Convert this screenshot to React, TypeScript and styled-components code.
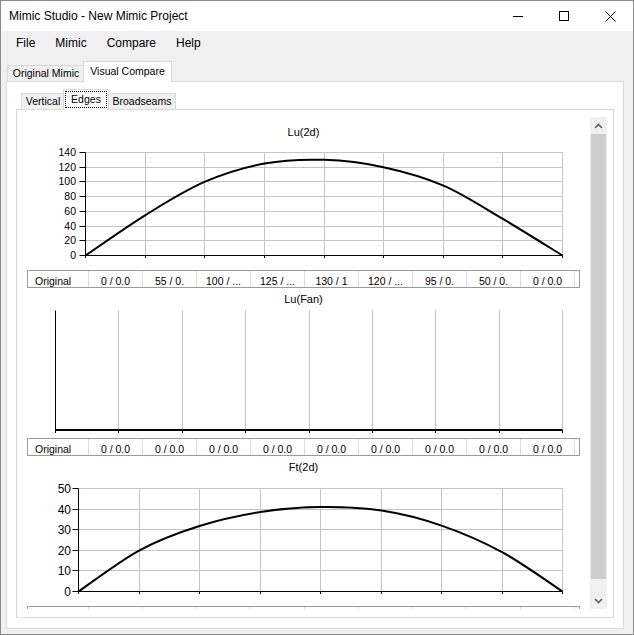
import React from "react";
import styled, { createGlobalStyle } from "styled-components";

const GlobalStyle = createGlobalStyle`
  html, body { margin: 0; padding: 0; background: #ffffff; }
  body { font-family: "Liberation Sans", Arial, sans-serif; color: #000; }
  * { box-sizing: border-box; }
`;

const FONT = `"Liberation Sans", Arial, sans-serif`;

const Window = styled.div`
  width: 634px;
  height: 635px;
  border: 1px solid #8a8a8a;
  background: #f0f0f0;
  display: flex;
  flex-direction: column;
  overflow: hidden;
`;

const TitleBar = styled.div`
  height: 30px;
  flex: none;
  background: #ffffff;
  display: flex;
  align-items: center;
  padding-left: 8px;
`;

const TitleText = styled.div`
  flex: 1;
  font-size: 12px;
  white-space: nowrap;
`;

const WindowControls = styled.div`
  display: flex;
  height: 30px;
`;

const ControlButton = styled.div`
  width: 46px;
  height: 30px;
  display: flex;
  align-items: center;
  justify-content: center;
`;

const MenuBar = styled.div`
  height: 24px;
  flex: none;
  display: flex;
  padding-left: 5px;
  background: #f0f0f0;
`;

const MenuItem = styled.div`
  padding: 0 10px;
  font-size: 12px;
  line-height: 24px;
  white-space: nowrap;
`;

const TabControl = styled.div<{ $outer?: boolean }>`
  flex: 1;
  display: flex;
  flex-direction: column;
  min-height: 0;
  margin: ${(p) => (p.$outer ? "0 9px 5px 5px" : "0")};
`;

const TabStrip = styled.div<{ $h: number; $pl: number }>`
  height: ${(p) => p.$h}px;
  flex: none;
  display: flex;
  align-items: flex-end;
  padding-left: ${(p) => p.$pl}px;
`;

const Tab = styled.div<{ $active?: boolean; $w: number }>`
  position: relative;
  width: ${(p) => p.$w}px;
  height: ${(p) => (p.$active ? 21 : 16)}px;
  margin-left: ${(p) => (p.$active ? -2 : 0)}px;
  margin-right: ${(p) => (p.$active ? -1 : 0)}px;
  margin-bottom: ${(p) => (p.$active ? -1 : 0)}px;
  z-index: ${(p) => (p.$active ? 1 : 0)};
  border: 1px solid #d9d9d9;
  border-bottom: none;
  background: ${(p) => (p.$active ? "#ffffff" : "#f0f0f0")};
  display: flex;
  align-items: center;
  justify-content: center;
  padding-bottom: 2px;
  font-size: 10.5px;
  white-space: nowrap;
  flex: none;
`;

const FocusRect = styled.div`
  position: absolute;
  top: 1px;
  left: 1px;
  right: 1px;
  bottom: 2px;
  border: 1px dotted #000;
`;

const TabPage = styled.div<{ $inner?: boolean }>`
  flex: 1;
  min-height: 0;
  border: 1px solid #d9d9d9;
  background: #ffffff;
  display: flex;
  flex-direction: column;
  padding: ${(p) => (p.$inner ? "7px 6px 8px 5px" : "0 9px 10px 9px")};
`;

const ScrollPanel = styled.div`
  flex: 1;
  min-height: 0;
  display: flex;
  background: #ffffff;
`;

const ScrollContent = styled.div`
  flex: 1;
  overflow: hidden;
  display: flex;
  flex-direction: column;
  padding-left: 5px;
`;

const ChartTitle = styled.div<{ $h: number; $pt: number }>`
  width: 553px;
  height: ${(p) => p.$h}px;
  flex: none;
  padding-top: ${(p) => p.$pt}px;
  font-size: 11px;
  line-height: 14px;
  text-align: center;
  white-space: nowrap;
`;

const ChartSvg = styled.svg`
  display: block;
  flex: none;
`;

const DataRow = styled.div`
  width: 553px;
  height: 18px;
  flex: none;
  display: flex;
  border: 1px solid #9a9a9a;
  background: #ffffff;
  overflow: hidden;
`;

const DataCell = styled.div<{ $w: number; $left?: boolean }>`
  width: ${(p) => p.$w}px;
  height: 16px;
  flex: none;
  border-right: 1px solid #dcdcdc;
  padding-top: 3px;
  padding-left: ${(p) => (p.$left ? 7 : 0)}px;
  font-size: 10.5px;
  line-height: 14px;
  text-align: ${(p) => (p.$left ? "left" : "center")};
  white-space: nowrap;
  overflow: hidden;
`;

const ScrollBar = styled.div`
  width: 17px;
  flex: none;
  display: flex;
  flex-direction: column;
  background: #f0f0f0;
`;

const ArrowButton = styled.div`
  height: 17px;
  flex: none;
  display: flex;
  align-items: center;
  justify-content: center;
`;

const ScrollTrack = styled.div`
  flex: 1;
  padding: 0 1px;
  display: flex;
  flex-direction: column;
`;

const ScrollThumb = styled.div<{ $h: number }>`
  height: ${(p) => p.$h}px;
  flex: none;
  background: #cdcdcd;
`;

type ChartSpec = {
  title: string;
  titleH: number;
  titlePad: number;
  svgH: number;
  leftCol: number;
  rightCol: number;
  topRow: number;
  bottomRow: number;
  yMax: number;
  yStep: number | null;
  labelSize: number;
  labelGap: number;
  values: number[];
  rowLabel: string;
  row: string[];
};

const zeros = Array.from({ length: 9 }, () => "0 / 0.0");

const charts: ChartSpec[] = [
  {
    title: "Lu(2d)",
    titleH: 28,
    titlePad: 8,
    svgH: 125,
    leftCol: 58,
    rightCol: 535,
    topRow: 7,
    bottomRow: 110,
    yMax: 140,
    yStep: 20,
    labelSize: 10.5,
    labelGap: 9,
    values: [0, 55, 100, 125, 130, 120, 95, 50, 0],
    rowLabel: "Original",
    row: ["0 / 0.0", "55 / 0.", "100 / ...", "125 / ...", "130 / 1", "120 / ...", "95 / 0.", "50 / 0.", "0 / 0.0"],
  },
  {
    title: "Lu(Fan)",
    titleH: 20,
    titlePad: 4,
    svgH: 130,
    leftCol: 28,
    rightCol: 535,
    topRow: 2,
    bottomRow: 122,
    yMax: 1,
    yStep: null,
    labelSize: 10.5,
    labelGap: 9,
    values: [0, 0, 0, 0, 0, 0, 0, 0, 0],
    rowLabel: "Original",
    row: zeros,
  },
  {
    title: "Ft(2d)",
    titleH: 22,
    titlePad: 4,
    svgH: 128,
    leftCol: 51,
    rightCol: 535,
    topRow: 10,
    bottomRow: 113,
    yMax: 50,
    yStep: 10,
    labelSize: 12,
    labelGap: 7,
    values: [0, 20, 31.8, 38.6, 41, 39.3, 32, 19, 0],
    rowLabel: "",
    row: Array.from({ length: 9 }, () => ""),
  },
];

function splinePath(pts: [number, number][]): string {
  const n = pts.length;
  let d = `M${pts[0][0]},${pts[0][1]}`;
  for (let i = 0; i < n - 1; i++) {
    const p0 = pts[Math.max(0, i - 1)];
    const p1 = pts[i];
    const p2 = pts[i + 1];
    const p3 = pts[Math.min(n - 1, i + 2)];
    const c1x = p1[0] + (p2[0] - p0[0]) / 6;
    const c1y = p1[1] + (p2[1] - p0[1]) / 6;
    const c2x = p2[0] - (p3[0] - p1[0]) / 6;
    const c2y = p2[1] - (p3[1] - p1[1]) / 6;
    d += ` C${c1x.toFixed(2)},${c1y.toFixed(2)} ${c2x.toFixed(2)},${c2y.toFixed(2)} ${p2[0].toFixed(2)},${p2[1].toFixed(2)}`;
  }
  return d;
}

function Chart({ spec }: { spec: ChartSpec }) {
  const { leftCol, rightCol, topRow, bottomRow, yMax, yStep, svgH, values } = spec;
  const xs = Array.from({ length: 9 }, (_, i) => Math.round(leftCol + ((rightCol - leftCol) * i) / 8) + 0.5);
  const yOf = (v: number) => bottomRow + 0.5 - ((bottomRow - topRow) * v) / yMax;
  const L = leftCol + 0.5;
  const B = bottomRow + 0.5;
  const T = topRow + 0.5;
  const R = rightCol + 0.5;
  const grid = "#c4c4c4";
  const rows: number[] = [];
  if (yStep) {
    for (let v = 0; v <= yMax; v += yStep) rows.push(v);
  }
  const pts: [number, number][] = values.map((v, i) => [xs[i], yStep ? yOf(v) : B - 0.5]);
  return (
    <ChartSvg width={553} height={svgH} viewBox={`0 0 553 ${svgH}`}>
      {xs.slice(1).map((x, i) => (
        <line key={`v${i}`} x1={x} x2={x} y1={T} y2={B} stroke={grid} strokeWidth={1} />
      ))}
      {rows.slice(1).map((v) => {
        const y = Math.round(yOf(v) - 0.5) + 0.5;
        return <line key={`h${v}`} x1={L} x2={R} y1={y} y2={y} stroke={grid} strokeWidth={1} />;
      })}
      {xs.map((x, i) => (
        <line key={`t${i}`} x1={x} x2={x} y1={B} y2={B + 2.5} stroke="#000" strokeWidth={1} />
      ))}
      {rows.map((v) => {
        const y = Math.round(yOf(v) - 0.5) + 0.5;
        return (
          <g key={`l${v}`}>
            <line x1={L - 6} x2={L} y1={y} y2={y} stroke="#000" strokeWidth={1} />
            <text
              x={leftCol - spec.labelGap}
              y={y + spec.labelSize * 0.358}
              textAnchor="end"
              fontFamily={FONT}
              fontSize={spec.labelSize}
              fill="#000"
            >
              {v}
            </text>
          </g>
        );
      })}
      <line x1={L} x2={L} y1={T} y2={B} stroke="#000" strokeWidth={1} />
      <line x1={L} x2={R} y1={B} y2={B} stroke="#000" strokeWidth={1} />
      <path d={splinePath(pts)} fill="none" stroke="#000" strokeWidth={2} strokeLinejoin="round" />
    </ChartSvg>
  );
}

function Table({ label, cells }: { label: string; cells: string[] }) {
  return (
    <DataRow>
      <DataCell $w={61} $left>
        {label}
      </DataCell>
      {cells.map((c, i) => (
        <DataCell key={i} $w={54}>
          {c}
        </DataCell>
      ))}
    </DataRow>
  );
}

const Chevron = ({ up }: { up?: boolean }) => (
  <svg width="9" height="6" viewBox="0 0 9 6">
    <polyline
      points={up ? "1,5 4.5,1.5 8,5" : "1,1 4.5,4.5 8,1"}
      fill="none"
      stroke="#606060"
      strokeWidth={1.6}
    />
  </svg>
);

export default function App() {
  return (
    <>
      <GlobalStyle />
      <Window>
        <TitleBar>
          <TitleText>Mimic Studio - New Mimic Project</TitleText>
          <WindowControls>
            <ControlButton>
              <svg width="10" height="10" viewBox="0 0 10 10">
                <line x1="0" x2="10" y1="5.5" y2="5.5" stroke="#000" strokeWidth={1} />
              </svg>
            </ControlButton>
            <ControlButton>
              <svg width="10" height="10" viewBox="0 0 10 10">
                <rect x="0.5" y="0.5" width="9" height="9" fill="none" stroke="#000" strokeWidth={1} />
              </svg>
            </ControlButton>
            <ControlButton>
              <svg width="11" height="11" viewBox="0 0 11 11">
                <path d="M0.5,0.5 L10.5,10.5 M10.5,0.5 L0.5,10.5" stroke="#000" strokeWidth={1} />
              </svg>
            </ControlButton>
          </WindowControls>
        </TitleBar>
        <MenuBar>
          <MenuItem>File</MenuItem>
          <MenuItem>Mimic</MenuItem>
          <MenuItem>Compare</MenuItem>
          <MenuItem>Help</MenuItem>
        </MenuBar>
        <TabControl $outer>
          <TabStrip $h={26} $pl={1}>
            <Tab $w={78}>Original Mimic</Tab>
            <Tab $w={89} $active>
              Visual Compare
            </Tab>
          </TabStrip>
          <TabPage>
            <TabControl>
              <TabStrip $h={27} $pl={5}>
                <Tab $w={44}>Vertical</Tab>
                <Tab $w={46} $active>
                  Edges
                  <FocusRect />
                </Tab>
                <Tab $w={68}>Broadseams</Tab>
              </TabStrip>
              <TabPage $inner>
                <ScrollPanel>
                  <ScrollContent>
                    {charts.map((c) => (
                      <React.Fragment key={c.title}>
                        <ChartTitle $h={c.titleH} $pt={c.titlePad}>
                          {c.title}
                        </ChartTitle>
                        <Chart spec={c} />
                        <Table label={c.rowLabel} cells={c.row} />
                      </React.Fragment>
                    ))}
                  </ScrollContent>
                  <ScrollBar>
                    <ArrowButton>
                      <Chevron up />
                    </ArrowButton>
                    <ScrollTrack>
                      <ScrollThumb $h={445} />
                    </ScrollTrack>
                    <ArrowButton>
                      <Chevron />
                    </ArrowButton>
                  </ScrollBar>
                </ScrollPanel>
              </TabPage>
            </TabControl>
          </TabPage>
        </TabControl>
      </Window>
    </>
  );
}
